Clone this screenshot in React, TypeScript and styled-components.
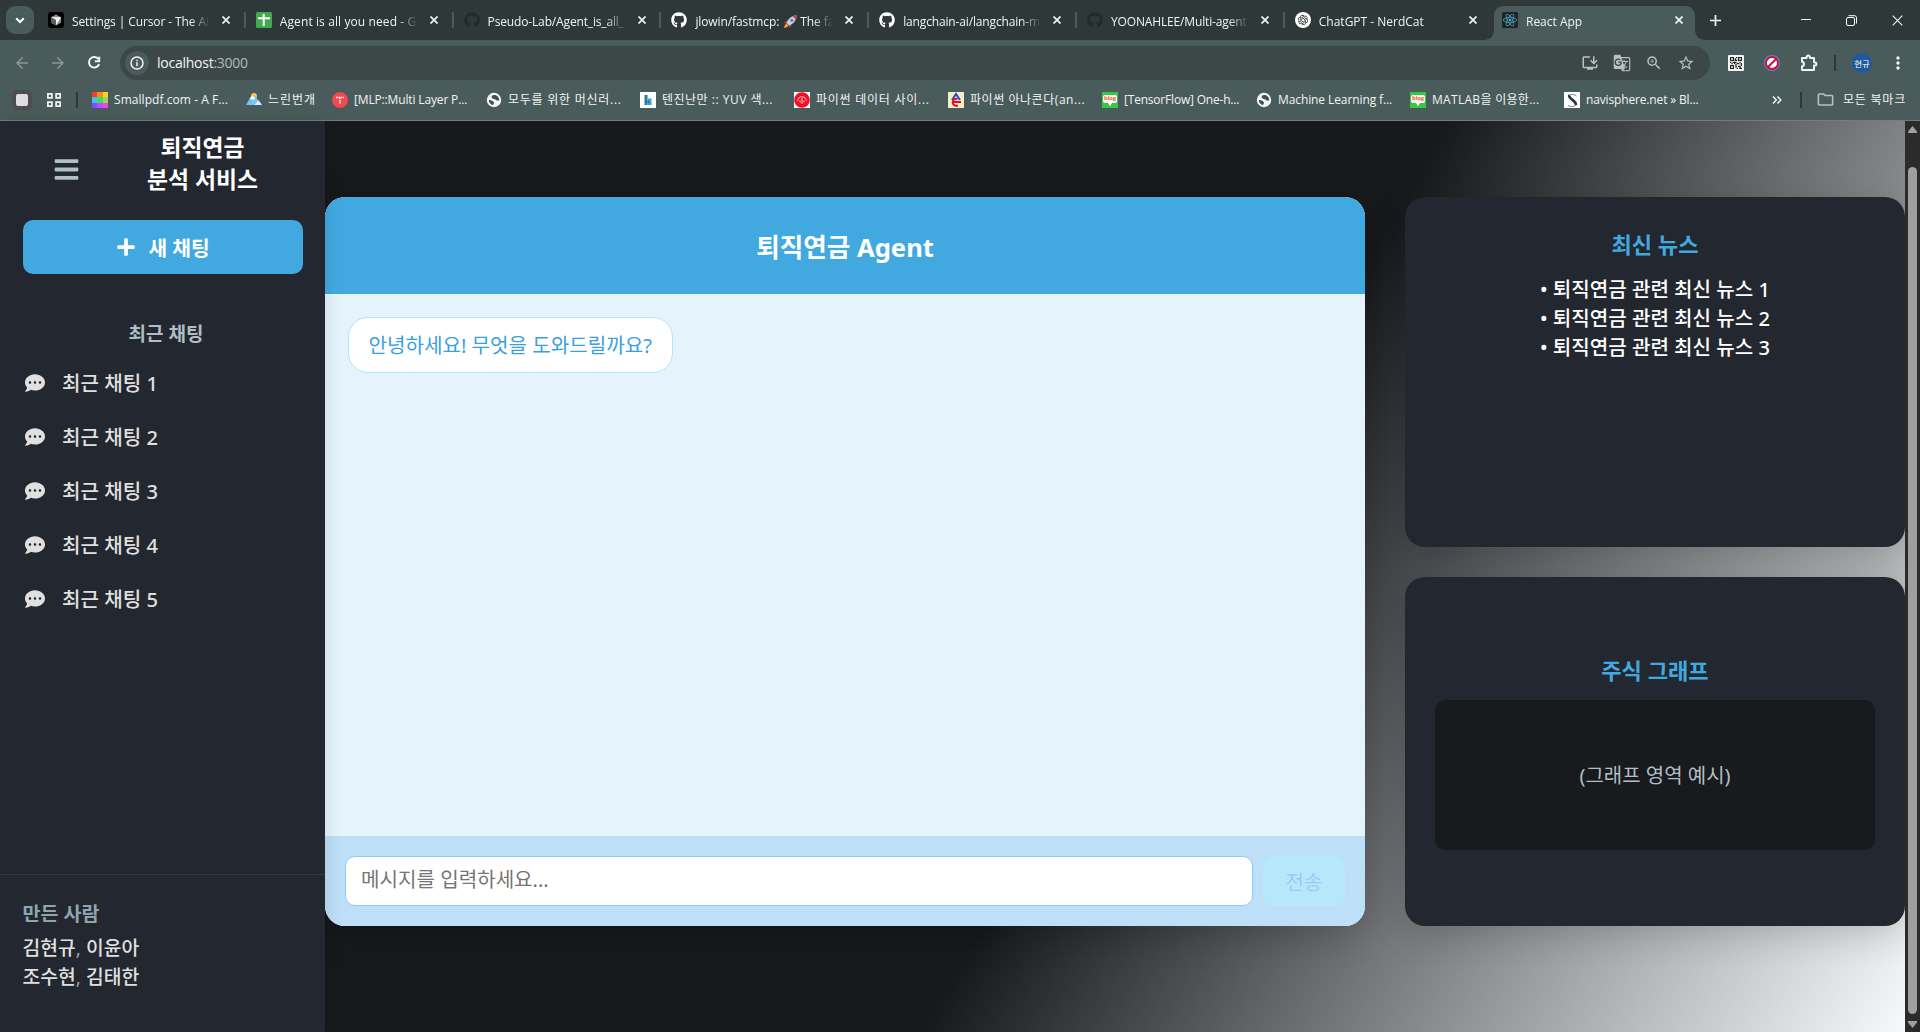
import React from "react";
import styled, { createGlobalStyle, css } from "styled-components";
import { FaBars, FaPlus, FaCommentDots, FaGithub, FaReact } from "react-icons/fa";
import { RiOpenaiFill } from "react-icons/ri";
import {
  MdOutlineInstallDesktop,
  MdGTranslate,
  MdZoomIn,
  MdStarBorder,
  MdArrowBack,
  MdArrowForward,
  MdMoreVert,
  MdQrCode2,
  MdOutlineFolder,
} from "react-icons/md";

const GlobalStyle = createGlobalStyle`
  * { box-sizing: border-box; }
  body { margin: 0; background: #18191d; overflow: hidden; }
  body, input, button { font-family: "Noto Sans", "Noto Sans CJK KR", sans-serif; }
  h1, h2, h3, ul, p { margin: 0; padding: 0; }
  ul { list-style: none; }
  svg { display: block; flex: none; }
`;

const Window = styled.div`
  display: flex;
  flex-direction: column;
  width: 1920px;
  height: 1032px;
  overflow: hidden;
`;

/* ---------- browser chrome ---------- */

const TabStrip = styled.div`
  display: flex;
  height: 40px;
  padding-left: 6px;
  background: #2e3838;
`;

const TabSearch = styled.div`
  display: flex;
  align-items: center;
  justify-content: center;
  width: 28px;
  height: 28px;
  margin: 6px 4px 0 0;
  border-radius: 9px;
  background: #4a5b5b;
`;

const Tab = styled.div<{ $active?: boolean; $w?: number }>`
  display: flex;
  align-items: center;
  position: relative;
  width: 207.8px;
  height: 40px;
  padding-left: 10px;
  flex: none;
  ${(p) =>
    p.$active &&
    css`
      width: 201px;
      height: 34px;
      margin: 6px 0 0 1.4px;
      padding: 0 0 6px 8px;
      border-radius: 9px 9px 0 0;
      background: #4a5b5b;
      &::before,
      &::after {
        content: "";
        position: absolute;
        bottom: 0;
        width: 9px;
        height: 9px;
      }
      &::before {
        left: -9px;
        background: radial-gradient(circle at 0 0, transparent 8.5px, #4a5b5b 9px);
      }
      &::after {
        right: -9px;
        background: radial-gradient(circle at 100% 0, transparent 8.5px, #4a5b5b 9px);
      }
    `}
`;

const TabTitle = styled.div<{ $spacing?: number }>`
  display: flex;
  align-items: center;
  width: 138px;
  margin-left: 8px;
  padding-top: 3px;
  overflow: hidden;
  white-space: pre;
  color: #f1f4f4;
  font: 12px/18px "Open Sans", "Noto Sans CJK KR", sans-serif;
  letter-spacing: ${(p) => p.$spacing ?? -0.15}px;
  mask-image: linear-gradient(90deg, #000 118px, transparent 138px);
`;

const TabClose = styled.div<{ $gap?: number }>`
  margin-left: ${(p) => p.$gap ?? 12}px;
`;

const TabDivider = styled.div`
  width: 2px;
  height: 16px;
  margin-left: auto;
  background: #4a5b5b;
`;

const NewTab = styled.div`
  display: flex;
  align-items: center;
  margin-left: 15px;
`;

const WindowControls = styled.div`
  display: flex;
  align-items: center;
  gap: 35px;
  margin-left: auto;
  padding-right: 17px;
`;

const Toolbar = styled.div`
  display: flex;
  align-items: center;
  height: 46px;
  background: #4a5b5b;
  color: #f1f4f4;
`;

const NavButtons = styled.div`
  display: flex;
  gap: 18px;
  padding-left: 13px;
  width: 120px;
`;

const Omnibox = styled.div`
  display: flex;
  align-items: center;
  width: 1590px;
  height: 34px;
  padding: 0 15px 0 5px;
  border-radius: 17px;
  background: #3c4848;
`;

const SiteInfo = styled.div`
  display: flex;
  align-items: center;
  justify-content: center;
  width: 24px;
  height: 24px;
  border-radius: 12px;
  background: #4a5b5b;
`;

const Url = styled.div`
  flex: 1;
  margin-left: 8px;
  color: #f4f6f6;
  font: 14px/20px "Open Sans", sans-serif;
  letter-spacing: -0.25px;
  span {
    color: #b1b8b8;
  }
`;

const OmniActions = styled.div`
  display: flex;
  gap: 14px;
  color: #b9bfbf;
`;

const Extensions = styled.div`
  display: flex;
  align-items: center;
  padding-left: 16px;
`;

const Gap = styled.div<{ $w: number }>`
  width: ${(p) => p.$w}px;
`;

const Bar = styled.div`
  width: 2px;
  height: 16px;
  flex: none;
  background: #2e3838;
`;

const Avatar = styled.div`
  width: 20px;
  height: 20px;
  border-radius: 10px;
  background: #1f5b9b;
  color: #fff;
  text-align: center;
  font: 8.5px/20px "Noto Sans CJK KR", sans-serif;
`;

const BookmarkBar = styled.div`
  display: flex;
  align-items: center;
  height: 35px;
  padding: 0 14px 7px 12px;
  border-bottom: 1px solid #6d807f;
  background: #4a5b5b;
`;

const TabGroup = styled.div`
  display: flex;
  align-items: center;
  justify-content: center;
  width: 20px;
  height: 20px;
  border-radius: 5px;
  background: #4e4c4e;
  &::after {
    content: "";
    width: 12px;
    height: 12px;
    border-radius: 2px;
    background: #dcdfe1;
  }
`;

const Bookmark = styled.div<{ $w?: number; $spacing?: number }>`
  display: flex;
  align-items: center;
  gap: 6px;
  width: ${(p) => p.$w ?? 154}px;
  flex: none;
  white-space: nowrap;
  color: #f1f4f4;
  font: 12px/18px "Open Sans", "Noto Sans CJK KR", sans-serif;
  letter-spacing: ${(p) => p.$spacing ?? -0.3}px;
`;

const AllBookmarks = styled.div`
  display: flex;
  align-items: center;
  margin-left: auto;
  color: #f1f4f4;
  font: 12px/18px "Open Sans", "Noto Sans CJK KR", sans-serif;
  letter-spacing: 0.8px;
`;

/* ---------- page ---------- */

const Viewport = styled.div`
  display: flex;
  height: 911px;
`;

const Page = styled.div`
  display: flex;
  width: 1905px;
  background: linear-gradient(120deg, #18191d 60%, #f8f9fb 100%) 0 -37px / 1905px 948px no-repeat;
`;

const Sidebar = styled.aside`
  display: flex;
  flex-direction: column;
  position: relative;
  z-index: 1;
  width: 325px;
  background: #23272f;
  box-shadow: 2px 0 16px rgba(0, 0, 0, 0.1);
`;

const Brand = styled.div`
  display: flex;
  align-items: center;
  height: 99px;
  padding: 0 0 2px 53px;
  color: #b0bec5;
`;

const BrandName = styled.h2`
  width: 250px;
  margin-top: -12px;
  text-align: center;
  color: #fff;
  font-size: 22.8px;
  line-height: 32px;
  font-weight: 700;
`;

const NewChat = styled.button`
  display: flex;
  align-items: center;
  justify-content: center;
  gap: 12px;
  width: 280px;
  height: 54px;
  margin: 0 0 0 23px;
  padding: 0;
  border: 0;
  border-radius: 10px;
  background: #42a9e0;
  color: #fff;
  font-size: 20.3px;
  font-weight: 700;
`;

const RecentTitle = styled.h3`
  margin-top: 45px;
  padding-left: 7px;
  text-align: center;
  color: #b0bec5;
  font-size: 19px;
  line-height: 30px;
  font-weight: 700;
`;

const RecentList = styled.ul`
  flex: 1;
  padding-top: 8px;
`;

const RecentItem = styled.li`
  display: flex;
  align-items: center;
  gap: 17px;
  height: 54px;
  padding-left: 25px;
  color: #e0e0e0;
  font-size: 20.1px;
  line-height: 30px;
  font-weight: 500;
  svg {
    margin-top: -2px;
  }
`;

const Makers = styled.div`
  height: 158px;
  padding: 24px 22.5px 0;
  border-top: 1px solid #343840;
  color: #90a4ae;
  font-size: 19.3px;
  line-height: 29px;
  h3 {
    margin-bottom: 5px;
    font-size: 19.5px;
    font-weight: 700;
  }
  span {
    color: #e0e0e0;
    font-weight: 500;
  }
`;

const ChatCard = styled.section`
  display: flex;
  flex-direction: column;
  width: 1040px;
  height: 729px;
  margin: 76px 40px 0 0;
  border-radius: 20px;
  overflow: hidden;
  background: #e4f3fc;
  box-shadow: 0 8px 36px rgba(0, 0, 0, 0.2);
`;

const ChatHeader = styled.h1`
  height: 97px;
  background: #42a9e0;
  color: #fff;
  text-align: center;
  font-size: 25.6px;
  line-height: 101px;
  font-weight: 700;
`;

const Messages = styled.div`
  flex: 1;
  padding: 23px;
`;

const Bubble = styled.div`
  width: 325px;
  height: 56px;
  padding-left: 19.5px;
  border: 1px solid #b3e5fc;
  border-radius: 20px;
  background: #fff;
  color: #399fe2;
  white-space: nowrap;
  font-size: 20.1px;
  line-height: 56px;
`;

const Composer = styled.div`
  display: flex;
  gap: 10px;
  height: 90px;
  padding: 20px;
  background: #bddff8;
`;

const MessageInput = styled.input`
  width: 908px;
  height: 50px;
  padding: 0 15px 3px;
  border: 1px solid #90caf9;
  border-radius: 10px;
  outline: 0;
  background: #fff;
  font-size: 20.1px;
  &::placeholder {
    color: #757575;
  }
`;

const Send = styled.button`
  width: 82px;
  height: 50px;
  padding: 0;
  border: 0;
  border-radius: 10px;
  background: #b7e7fb;
  color: #99cdf9;
  font-size: 20px;
`;

const Aside = styled.div`
  display: flex;
  flex-direction: column;
  gap: 30px;
  width: 500px;
  padding-top: 76px;
`;

const Panel = styled.section<{ $h: number; $top: number }>`
  display: flex;
  flex-direction: column;
  align-items: center;
  height: ${(p) => p.$h}px;
  padding: ${(p) => p.$top}px 30px 0;
  border-radius: 20px;
  background: #23272f;
  box-shadow: 0 8px 36px rgba(0, 0, 0, 0.18);
`;

const PanelTitle = styled.h2`
  color: #42a9e0;
  font-size: 22.1px;
  line-height: 32px;
  font-weight: 700;
`;

const News = styled.ul`
  margin-top: 15px;
  color: #fff;
  font-size: 20.1px;
  line-height: 29px;
  font-weight: 500;
  white-space: pre;
`;

const GraphBox = styled.div`
  width: 440px;
  height: 150px;
  margin-top: 14px;
  border-radius: 10px;
  background: #191a1e;
  color: #b0bec5;
  text-align: center;
  font-size: 20px;
  line-height: 152px;
`;

const Scrollbar = styled.div`
  display: flex;
  flex-direction: column;
  align-items: center;
  width: 15px;
  padding: 5px 0 4px;
  background: #2b2b2b;
`;

const Thumb = styled.div`
  width: 9px;
  height: 847px;
  margin: 34px 0 7px;
  border-radius: 4.5px;
  background: #9f9f9f;
`;

/* ---------- glyphs ---------- */

const Cross = ({ s = 8, w = 1.7 }: { s?: number; w?: number }) => (
  <svg width={s} height={s} viewBox="0 0 8 8" stroke="#f1f4f4" strokeWidth={(w * 8) / s} fill="none">
    <path d="M.5.5l7 7M7.5.5l-7 7" />
  </svg>
);

const CursorIcon = () => (
  <svg width="16" height="16" viewBox="0 0 16 16">
    <rect width="16" height="16" rx="3" fill="#000" />
    <path d="M8 2.5l5 2.8v5.4l-5 2.8-5-2.8V5.3z" fill="#8d8d8d" />
    <path d="M3 5.3h10L8 13.5V8z" fill="#f4f4f4" />
    <path d="M3 5.3L8 8v5.5l-5-2.8z" fill="#5d5d5d" />
  </svg>
);

const SheetIcon = () => (
  <svg width="16" height="16" viewBox="0 0 16 16">
    <rect width="16" height="16" rx="1.5" fill="#43a854" />
    <path d="M2 6.2h12M7.7 2v12" stroke="#fff" strokeWidth="2" />
  </svg>
);

const GptIcon = () => (
  <svg width="16" height="16" viewBox="0 0 16 16">
    <circle cx="8" cy="8" r="8" fill="#fff" />
    <RiOpenaiFill x={2} y={2} size={12} color="#222" />
  </svg>
);

const ReactIcon = () => (
  <svg width="16" height="16" viewBox="0 0 16 16">
    <rect width="16" height="16" rx="1.5" fill="#20232a" />
    <FaReact x={1} y={1} size={14} color="#53b5cf" />
  </svg>
);

const Rocket = () => (
  <svg width="15" height="14" viewBox="-1 0 15 14">
    <path d="M4 5L1 8l2.5.4zM9 10l-3 3-.4-2.5z" fill="#d8304a" />
    <path d="M13.5.5C9 .5 5.5 3 3.5 8L6 10.5c5-2 7.5-5.5 7.5-10z" fill="#c9d3dc" />
    <path d="M13.5.5c-1.5 0-2.8.2-4 .7l3.3 3.3c.5-1.2.7-2.5.7-4z" fill="#e0314f" />
    <circle cx="8.8" cy="5.2" r="1.5" fill="#3b88c3" />
    <path d="M3.6 8.6c-1.6.6-2 2.5-2.6 4.4 1.9-.6 3.8-1 4.4-2.6z" fill="#f5a030" />
  </svg>
);

const Reload = () => (
  <svg width="18" height="18" viewBox="0 0 18 18" fill="none" stroke="#f1f4f4" strokeWidth="2">
    <path d="M13.6 5.2A5.300 5.300 0 1 0 14.200 10.200" />
    <path d="M14.200 2.800V7.200H9.800" />
  </svg>
);

const Palette = () => (
  <svg width="16" height="16" viewBox="0 0 16 16" shapeRendering="crispEdges">
    {[
      ["#ff3b1f", "#ff8a1f", "#ffcf2d"],
      ["#36c5f0", "#3ddc64", "#8ee04e"],
      ["#7a4dff", "#c04dff", "#ff3df0"],
    ].map((row, y) =>
      row.map((c, x) => <rect key={c} x={x * 5.34} y={y * 5.34} width="5.4" height="5.4" fill={c} />)
    )}
  </svg>
);

const Mountain = () => (
  <svg width="16" height="16" viewBox="0 0 16 16">
    <circle cx="8" cy="4" r="3" fill="#f3c34c" />
    <path d="M0 13L4 6l3-2h2l3 4 2 5z" fill="#79c3ee" />
    <path d="M3.5 7L6 3.5 9 5.5 8 8 6 7z" fill="#fff" />
    <path d="M8.5 13l4-5L16 13z" fill="#d5eefb" />
  </svg>
);

const RedDot = () => (
  <svg width="16" height="16" viewBox="0 0 16 16">
    <circle cx="8" cy="8" r="8" fill="#f5474f" />
    <path d="M4 5.5h8M8 5.5v6" stroke="#fff" strokeWidth="1.5" strokeDasharray="1.6 .8" />
  </svg>
);

const Globe = () => (
  <svg width="16" height="16" viewBox="0 0 16 16">
    <circle cx="8" cy="8" r="7.2" fill="#f4f6f6" />
    <path
      d="M8 2.8C5.5 3 5 4 5.5 5.5s3 1 4 2 1.5.8 3.5.8c0-3-2-5.5-5-5.5z"
      fill="#3f5050"
      transform="translate(.3 .2)"
    />
    <path d="M2.8 8c1.5 0 3 .5 4 1.2s1.5 1.5 1 2.3-.5 1.7-1.3 1.5C4.5 12.5 2.8 10.5 2.8 8z" fill="#3f5050" />
  </svg>
);

const BlueB = () => (
  <svg width="16" height="16" viewBox="0 0 16 16">
    <rect width="16" height="16" fill="#fff" />
    <path d="M4.5 3h3v10h-3z" fill="#2b79a8" />
    <path d="M7.5 6.5h4V13h-4z" fill="#35a5d6" />
    <path d="M7.5 9H9v2H7.500z" fill="#2b5f80" />
  </svg>
);

const RedUmbrella = () => (
  <svg width="16" height="16" viewBox="0 0 16 16">
    <rect width="16" height="16" fill="#fff" />
    <circle cx="8" cy="8" r="7.8" fill="#f40f22" />
    <path d="M3.700 9a4.300 4.300 0 018.600 0M8 6v6M6 8.500v2M10 8.500v2" stroke="#ffc9cc" fill="none" />
  </svg>
);

const Anaconda = () => (
  <svg width="16" height="16" viewBox="0 0 16 16">
    <rect width="16" height="16" fill="#f1efc4" />
    <path d="M4 8l4-6 4 6" stroke="#3144c8" strokeWidth="2" fill="none" />
    <path d="M9.500 7a3.500 3.500 0 10.500 6.300M4 10h9" stroke="#e10d2c" strokeWidth="2" fill="none" />
  </svg>
);

const BlogBox = styled.div`
  display: flex;
  flex-direction: column;
  align-items: center;
  width: 16px;
  height: 16px;
  padding-top: 3px;
  background: #36c746;
  span {
    width: 14px;
    height: 8px;
    border-radius: 2px;
    background: #fff;
    color: #e8662a;
    text-align: center;
    font: 700 6px/7px "Open Sans", sans-serif;
    letter-spacing: -0.2px;
  }
  &::after {
    content: "";
    border: 2px solid transparent;
    border-top: 3px solid #fff;
  }
`;
const Blog = () => (
  <BlogBox>
    <span>blog</span>
  </BlogBox>
);

const Navi = () => (
  <svg width="16" height="16" viewBox="0 0 16 16">
    <rect width="16" height="16" fill="#fff" />
    <path d="M5.500 3C3.500 7 12.500 8 11.800 13" stroke="#30363a" strokeWidth="2.800" fill="none" />
    <path d="M5 3.500C7 1.800 10 2 12.500 4M12 13c-2 2-5 2-8 .5" stroke="#6d7275" strokeWidth=".9" fill="none" />
  </svg>
);

const Blocked = () => (
  <svg width="16" height="16" viewBox="0 0 16 16">
    <circle cx="8" cy="8" r="8" fill="#5a86d8" />
    <circle cx="8" cy="8" r="6" fill="#fff" stroke="#c8103c" strokeWidth="2" />
    <path d="M4 12l8-8" stroke="#c8103c" strokeWidth="2" />
  </svg>
);

const QrBox = () => (
  <svg width="16" height="16" viewBox="0 0 16 16">
    <rect width="16" height="16" rx="1" fill="#f4f6f6" />
    <MdQrCode2 x={0} y={0} size={16} color="#222" />
  </svg>
);

const Puzzle = () => (
  <svg width="18" height="18" viewBox="0 0 18 18" fill="none" stroke="#f1f4f4" strokeWidth="2" strokeLinejoin="round">
    <path d="M2 4h4.500c0-1.600.6-2.500 1.800-2.500S10 2.400 10 4h4v4.200c1.700 0 2.500.6 2.500 1.700s-.8 1.700-2.500 1.700V16H2v-3.700c1.300-.2 2-1 2-2.300S3.300 7.900 2 7.700z" />
  </svg>
);

const AppsGrid = () => (
  <svg width="14" height="14" viewBox="0 0 14 14" fill="none" stroke="#f1f4f4" strokeWidth="1.7">
    <path d="M.9.9h4v4h-4zM9.100.9h4v4h-4zM.9 9.100h4v4h-4zM9.100 9.100h4v4h-4z" />
  </svg>
);

const Arrow = ({ up }: { up?: boolean }) => (
  <svg width="9" height="7" viewBox="0 0 9 7" fill="#9f9f9f">
    <path d={up ? "M4.500 0L9 5.500V7H0V5.500z" : "M4.500 7L9 1.500V0H0v1.500z"} />
  </svg>
);

/* ---------- data ---------- */

const tabs: { icon: React.ReactNode; title: React.ReactNode; spacing?: number }[] = [
  { icon: <CursorIcon />, title: "Settings | Cursor - The AI", spacing: -0.1 },
  { icon: <SheetIcon />, title: "Agent is all you need - G", spacing: 0.1 },
  { icon: <FaGithub size={16} color="#24292e" />, title: "Pseudo-Lab/Agent_is_all_" },
  { icon: <FaGithub size={16} color="#fff" />, title: <>jlowin/fastmcp: <Rocket /> The fa</>, spacing: -0.1 },
  { icon: <FaGithub size={16} color="#fff" />, title: "langchain-ai/langchain-m" },
  { icon: <FaGithub size={16} color="#24292e" />, title: "YOONAHLEE/Multi-agent" },
  { icon: <GptIcon />, title: "ChatGPT - NerdCat", spacing: 0 },
];

const bookmarks: { icon: React.ReactNode; title: string; w?: number; spacing?: number }[] = [
  { icon: <Palette />, title: "Smallpdf.com - A F...", spacing: 0.05 },
  { icon: <Mountain />, title: "느린번개", w: 86, spacing: 1 },
  { icon: <RedDot />, title: "[MLP::Multi Layer P...", spacing: -0.15 },
  { icon: <Globe />, title: "모두를 위한 머신러...", spacing: 0.75 },
  { icon: <BlueB />, title: "텐진난만 :: YUV 색...", spacing: 0.5 },
  { icon: <RedUmbrella />, title: "파이썬 데이터 사이...", spacing: 0.75 },
  { icon: <Anaconda />, title: "파이썬 아나콘다(an...", spacing: 0.55 },
  { icon: <Blog />, title: "[TensorFlow] One-h...", spacing: -0.2 },
  { icon: <Globe />, title: "Machine Learning f...", spacing: -0.1 },
  { icon: <Blog />, title: "MATLAB을 이용한...", spacing: 0.3 },
  { icon: <Navi />, title: "navisphere.net » Bl...", spacing: -0.15 },
];

function BrowserChrome() {
  return (
    <>
      <TabStrip>
        <TabSearch>
          <svg width="10" height="7" viewBox="0 0 10 7" fill="none" stroke="#fff" strokeWidth="2">
            <path d="M1.200 1.200L5 5l3.800-3.800" />
          </svg>
        </TabSearch>
        {tabs.map((t, i) => (
          <Tab key={i}>
            {t.icon}
            <TabTitle $spacing={t.spacing}>{t.title}</TabTitle>
            <TabClose>
              <Cross />
            </TabClose>
            {i < tabs.length - 1 && <TabDivider />}
          </Tab>
        ))}
        <Tab $active>
          <ReactIcon />
          <TabTitle $spacing={0}>React App</TabTitle>
          <TabClose $gap={11}>
            <Cross />
          </TabClose>
        </Tab>
        <NewTab>
          <svg width="11" height="11" viewBox="0 0 11 11" stroke="#f1f4f4" strokeWidth="1.7">
            <path d="M5.500 0v11M0 5.500h11" />
          </svg>
        </NewTab>
        <WindowControls>
          <svg width="10" height="10" viewBox="0 0 10 10" stroke="#fff">
            <path d="M0 4.500h10" />
          </svg>
          <svg width="11" height="11" viewBox="0 0 11 11" fill="none" stroke="#fff">
            <rect x=".5" y="2.5" width="8" height="8" rx="1.5" />
            <path d="M2.500.7H8.500a2 2 0 012 2V8.500" />
          </svg>
          <Cross s={11} w={1.1} />
        </WindowControls>
      </TabStrip>
      <Toolbar>
        <NavButtons>
          <MdArrowBack size={18} color="#8b9797" />
          <MdArrowForward size={18} color="#8b9797" />
          <Reload />
        </NavButtons>
        <Omnibox>
          <SiteInfo>
            <svg width="14" height="14" viewBox="0 0 14 14" fill="none" stroke="#f1f4f4" strokeWidth="1.5">
              <circle cx="7" cy="7" r="6" />
              <path d="M7 6.200V10.200M7 3.700v1.500" />
            </svg>
          </SiteInfo>
          <Url>
            localhost<span>:3000</span>
          </Url>
          <OmniActions>
            <MdOutlineInstallDesktop size={18} />
            <MdGTranslate size={18} />
            <MdZoomIn size={18} />
            <MdStarBorder size={18} />
          </OmniActions>
        </Omnibox>
        <Extensions>
          <Gap $w={2} />
          <QrBox />
          <Gap $w={20} />
          <Blocked />
          <Gap $w={20} />
          <Puzzle />
          <Gap $w={16} />
          <Bar />
          <Gap $w={16} />
          <Avatar>현규</Avatar>
          <Gap $w={16} />
          <MdMoreVert size={20} />
        </Extensions>
      </Toolbar>
      <BookmarkBar>
        <TabGroup />
        <Gap $w={15} />
        <AppsGrid />
        <Gap $w={15} />
        <Bar />
        <Gap $w={14} />
        {bookmarks.map((b) => (
          <Bookmark key={b.title} $w={b.w} $spacing={b.spacing}>
            {b.icon}
            <span>{b.title}</span>
          </Bookmark>
        ))}
        <AllBookmarks>
          <svg width="10" height="8" viewBox="0 0 10 8" fill="none" stroke="#f1f4f4" strokeWidth="1.5">
            <path d="M1 .5L4.300 4 1 7.500M5.500.5L8.800 4 5.500 7.500" />
          </svg>
          <Gap $w={18} />
          <Bar />
          <Gap $w={14} />
          <MdOutlineFolder size={19} color="#b9bfbf" />
          <Gap $w={8} />
          모든 북마크
        </AllBookmarks>
      </BookmarkBar>
    </>
  );
}

export default function App() {
  return (
    <Window>
      <GlobalStyle />
      <BrowserChrome />
      <Viewport>
        <Page>
          <Sidebar>
            <Brand>
              <FaBars size={27} />
              <BrandName>
                퇴직연금
                <br />
                분석 서비스
              </BrandName>
            </Brand>
            <NewChat>
              <FaPlus size={20} />
              새 채팅
            </NewChat>
            <RecentTitle>최근 채팅</RecentTitle>
            <RecentList>
              {[1, 2, 3, 4, 5].map((n) => (
                <RecentItem key={n}>
                  <FaCommentDots size={20} />
                  최근 채팅 {n}
                </RecentItem>
              ))}
            </RecentList>
            <Makers>
              <h3>만든 사람</h3>
              <p>
                <span>김현규</span>, <span>이윤아</span>
              </p>
              <p>
                <span>조수현</span>, <span>김태한</span>
              </p>
            </Makers>
          </Sidebar>
          <ChatCard>
            <ChatHeader>퇴직연금 Agent</ChatHeader>
            <Messages>
              <Bubble>안녕하세요! 무엇을 도와드릴까요?</Bubble>
            </Messages>
            <Composer>
              <MessageInput placeholder="메시지를 입력하세요..." />
              <Send>전송</Send>
            </Composer>
          </ChatCard>
          <Aside>
            <Panel $h={350} $top={31}>
              <PanelTitle>최신 뉴스</PanelTitle>
              <News>
                {[1, 2, 3].map((n) => (
                  <li key={n}>• 퇴직연금 관련 최신 뉴스 {n}</li>
                ))}
              </News>
            </Panel>
            <Panel $h={349} $top={77}>
              <PanelTitle>주식 그래프</PanelTitle>
              <GraphBox>(그래프 영역 예시)</GraphBox>
            </Panel>
          </Aside>
        </Page>
        <Scrollbar>
          <Arrow up />
          <Thumb />
          <Arrow />
        </Scrollbar>
      </Viewport>
    </Window>
  );
}
